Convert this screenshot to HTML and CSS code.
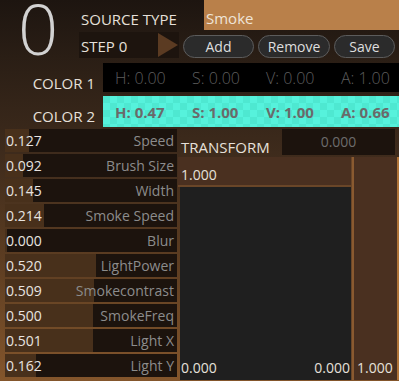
FILE: index.html
```html
<!DOCTYPE html>
<html lang="en">
<head>
    <meta charset="UTF-8">
    <meta name="viewport" content="width=device-width, initial-scale=1.0">
    <title>Smoke Brush</title>
    <link rel="stylesheet" href="styles.css">
</head>
<body>
    <div class="top">
        <div class="bigzero">0</div>
        <div class="topright">
            <div class="row1">
                <div class="srclabel">SOURCE TYPE</div>
                <div class="srcbox">Smoke</div>
            </div>
            <div class="row2">
                <div class="stepbox">STEP 0<span class="play"></span></div>
                <button class="btn btn-add">Add</button>
                <button class="btn btn-remove">Remove</button>
                <button class="btn btn-save">Save</button>
            </div>
        </div>
    </div>

    <div class="colorrow">
        <div class="colorlabel">COLOR 1</div>
        <div class="colorbox c1">
            <span class="ch">H: 0.00</span><span class="cs">S: 0.00</span><span class="cv">V: 0.00</span><span class="ca">A: 1.00</span>
        </div>
    </div>
    <div class="colorrow">
        <div class="colorlabel">COLOR 2</div>
        <div class="colorbox c2">
            <span class="ch">H: 0.47</span><span class="cs">S: 1.00</span><span class="cv">V: 1.00</span><span class="ca">A: 0.66</span>
        </div>
    </div>

    <div class="main">
        <div class="sliders">
            <div class="slider"><div class="fill" style="width: 14%"></div><span class="val">0.127</span><span class="name">Speed</span></div>
            <div class="slider"><div class="fill" style="width: 10.5%"></div><span class="val">0.092</span><span class="name">Brush Size</span></div>
            <div class="slider"><div class="fill" style="width: 16%"></div><span class="val">0.145</span><span class="name">Width</span></div>
            <div class="slider"><div class="fill" style="width: 22.5%"></div><span class="val">0.214</span><span class="name">Smoke Speed</span></div>
            <div class="slider"><div class="fill" style="width: 1%"></div><span class="val">0.000</span><span class="name">Blur</span></div>
            <div class="slider"><div class="fill" style="width: 53%"></div><span class="val">0.520</span><span class="name">LightPower</span></div>
            <div class="slider"><div class="fill" style="width: 52%"></div><span class="val">0.509</span><span class="name">Smokecontrast</span></div>
            <div class="slider"><div class="fill" style="width: 51%"></div><span class="val">0.500</span><span class="name">SmokeFreq</span></div>
            <div class="slider"><div class="fill" style="width: 51%"></div><span class="val">0.501</span><span class="name">Light X</span></div>
            <div class="slider"><div class="fill" style="width: 18%"></div><span class="val">0.162</span><span class="name">Light Y</span></div>
        </div>
        <div class="transform">
            <div class="trhead">
                <div class="trlabel">TRANSFORM</div>
                <div class="trbox">0.000</div>
            </div>
            <div class="trbody">
                <div class="trleft">
                    <div class="yband">1.000</div>
                    <div class="canvas">
                        <span>0.000</span><span>0.000</span>
                    </div>
                </div>
                <div class="trright"><span>1.000</span></div>
            </div>
        </div>
    </div>
</body>
</html>
```

FILE: styles.css
```css
body {
    margin: 0;
    width: 399px;
    height: 381px;
    overflow: hidden;
    font-family: 'Open Sans', sans-serif;
    color: #e6e0da;
    background: linear-gradient(to bottom, #1d1510 0%, #2a1e15 15%, #3e2b1c 40%, #5e3e22 70%, #84562c 100%);
}

.top {
    display: flex;
    height: 61px;
}
.bigzero {
    width: 76px;
    height: 61px;
    font-size: 44px;
    font-weight: 300;
    line-height: 61px;
    color: #d2d2d2;
    text-align: center;
    transform-origin: 50% 34px;
    transform: scale(1.6, 1.6);
}
.topright {
    flex: 1;
    display: flex;
    flex-direction: column;
    margin-left: 3px;
}
.row1 {
    display: flex;
    height: 30px;
}
.srclabel {
    width: 125px;
    font-size: 15px;
    padding: 9px 0 0 2px;
    box-sizing: border-box;
}
.srcbox {
    flex: 1;
    background: #b9804a;
    font-size: 15px;
    padding: 8px 0 0 2px;
    color: #efe4d8;
}
.row2 {
    display: flex;
    align-items: center;
    margin-top: 2px;
    height: 26px;
}
.stepbox {
    width: 100px;
    height: 26px;
    background: #1d140e;
    font-size: 15px;
    line-height: 28px;
    padding-left: 2px;
    box-sizing: border-box;
    position: relative;
}
.play {
    position: absolute;
    right: 1px;
    top: 1px;
    width: 0;
    height: 0;
    border-top: 12px solid transparent;
    border-bottom: 12px solid transparent;
    border-left: 20px solid #5b3b22;
}
.btn {
    height: 23px;
    margin-left: 4px;
    border-radius: 12px;
    border: 1px solid #5c5c5c;
    background: #2b2b2b;
    color: #dedede;
    font-family: 'Open Sans', sans-serif;
    font-size: 14px;
    padding: 0;
    margin-top: 3px;
}
.btn-add { width: 71px; }
.btn-remove { width: 72px; }
.btn-save { width: 61px; }

.colorrow {
    display: flex;
    height: 31px;
    margin-top: 2px;
}
.colorlabel {
    width: 103px;
    font-size: 15px;
    text-align: right;
    padding: 10px 8px 0 0;
    box-sizing: border-box;
    color: #e6e0da;
}
.colorbox {
    flex: 1;
    display: flex;
    align-items: center;
    font-size: 16px;
    padding-left: 12px;
}
.colorbox span {
    flex: none;
    white-space: nowrap;
}
.ch { width: 77px; }
.cs { width: 74px; }
.cv { width: 75px; }
.c1 {
    background: #000;
    color: #5d5d5d;
    font-weight: 300;
    border-bottom: 2px solid #2e2218;
}
.c2 {
    background-color: #4ee8d1;
    background-image:
        linear-gradient(45deg, #56f2dc 25%, transparent 25%, transparent 75%, #56f2dc 75%),
        linear-gradient(45deg, #56f2dc 25%, transparent 25%, transparent 75%, #56f2dc 75%);
    background-size: 14px 14px;
    background-position: 0 0, 7px 7px;
    color: #6a6a6a;
    font-weight: bold;
    font-size: 15px;
}

.main {
    display: flex;
    margin-top: 2px;
}
.sliders {
    width: 172px;
    margin-left: 5px;
    display: flex;
    flex-direction: column;
    gap: 2px;
}
.slider {
    position: relative;
    height: 23px;
    background: #1c130d;
    display: flex;
    justify-content: space-between;
    align-items: center;
    font-size: 14px;
}
.fill {
    position: absolute;
    left: 0;
    top: 0;
    bottom: 0;
    background: rgba(110, 72, 40, 0.55);
}
.val {
    position: relative;
    color: #e8e4e0;
    padding-left: 1px;
}
.name {
    position: relative;
    color: #8c8c8c;
    padding-right: 3px;
}

.transform {
    flex: 1;
    margin-left: 1px;
    display: flex;
    flex-direction: column;
}
.trhead {
    display: flex;
    height: 26px;
}
.trlabel {
    width: 104px;
    font-size: 15px;
    padding: 8px 0 0 3px;
    box-sizing: border-box;
}
.trbox {
    width: 113px;
    background: #1c130d;
    color: #6c6c6c;
    font-size: 14px;
    text-align: center;
    line-height: 25px;
}
.trbody {
    display: flex;
    margin-top: 2px;
    height: 223px;
}
.trleft {
    width: 174px;
    display: flex;
    flex-direction: column;
}
.yband {
    height: 30px;
    background: #4a3020;
    border-right: 1px solid #6a4628;
    border-bottom: 2px solid #6a4628;
    font-size: 14px;
    padding: 8px 0 0 3px;
    box-sizing: border-box;
}
.canvas {
    flex: 1;
    background: #1f1f1f;
    margin-left: 2px;
    border-right: 1px solid #6a4628;
    display: flex;
    justify-content: space-between;
    align-items: flex-end;
    font-size: 14px;
    padding: 0 1px 3px 1px;
}
.trright {
    flex: 1;
    background: #4a3020;
    border-left: 2px solid #8a5a30;
    border-right: 2px solid #b07438;
    display: flex;
    align-items: flex-end;
    font-size: 14px;
    padding: 0 0 3px 3px;
}
```
